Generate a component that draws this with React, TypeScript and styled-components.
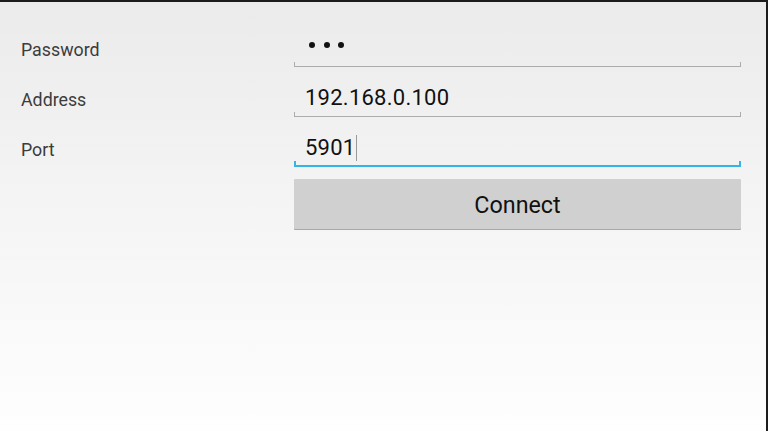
import React from 'react';
import styled, { createGlobalStyle } from 'styled-components';

const GlobalStyle = createGlobalStyle`
  html, body {
    margin: 0;
    padding: 0;
    background: #fefefe;
  }
  body {
    font-family: Roboto, 'Noto Sans', sans-serif;
  }
`;

const Screen = styled.div`
  box-sizing: border-box;
  width: 768px;
  height: 431px;
  border-top: 2px solid #1c1c1c;
  border-right: 2px solid #1c1c1c;
  background: linear-gradient(180deg, #ebebeb 0%, #f3f3f3 40%, #fefefe 100%);
  padding: 15px 0 0 21px;
`;

const Form = styled.div`
  display: grid;
  grid-template-columns: 273px 447px;
  grid-auto-rows: 50px;
`;

const Label = styled.div`
  align-self: end;
  padding-bottom: 7px;
  font-size: 17.8px;
  line-height: 20px;
  color: #3c3c3c;
`;

const Field = styled.div<{ $focused?: boolean }>`
  position: relative;
  display: flex;
  align-items: flex-end;
  box-sizing: border-box;
  padding: 0 0 ${p => (p.$focused ? 4 : 5)}px 11px;
  border-bottom: ${p => (p.$focused ? '2px solid #33b5e5' : '1px solid #acacac')};

  &::before,
  &::after {
    content: '';
    position: absolute;
    bottom: 0;
    width: ${p => (p.$focused ? 2 : 1)}px;
    height: 4px;
    background: ${p => (p.$focused ? '#33b5e5' : '#acacac')};
  }
  &::before { left: 0; }
  &::after { right: 0; }
`;

const Value = styled.span`
  font-size: 22px;
  line-height: 26px;
  letter-spacing: 0.25px;
  color: #111;
`;

const Caret = styled.span`
  display: inline-block;
  width: 1px;
  height: 26px;
  margin-left: 1px;
  background: #9a9a9a;
`;

const Dots = styled.div`
  display: flex;
  gap: 8.5px;
  height: 26px;
  align-items: center;
  padding: 0 0 7px 4px;
  box-sizing: border-box;
`;

const Dot = styled.span`
  width: 6px;
  height: 6px;
  border-radius: 50%;
  background: #111;
`;

const Button = styled.button`
  grid-column: 2;
  margin-top: 12px;
  height: 50px;
  border: none;
  border-radius: 1px;
  background: #d0d0d0;
  box-shadow: 0 1px 0 #a8a8a8;
  font-family: Roboto, 'Noto Sans', sans-serif;
  font-size: 23.3px;
  padding: 2px 0 0;
  color: #111;
  cursor: pointer;
`;

export default function App() {
  return (
    <>
      <GlobalStyle />
      <Screen>
        <Form>
          <Label>Password</Label>
          <Field>
            <Dots>
              <Dot />
              <Dot />
              <Dot />
            </Dots>
          </Field>
          <Label>Address</Label>
          <Field>
            <Value>192.168.0.100</Value>
          </Field>
          <Label>Port</Label>
          <Field $focused>
            <Value>5901</Value>
            <Caret />
          </Field>
          <Button>Connect</Button>
        </Form>
      </Screen>
    </>
  );
}
